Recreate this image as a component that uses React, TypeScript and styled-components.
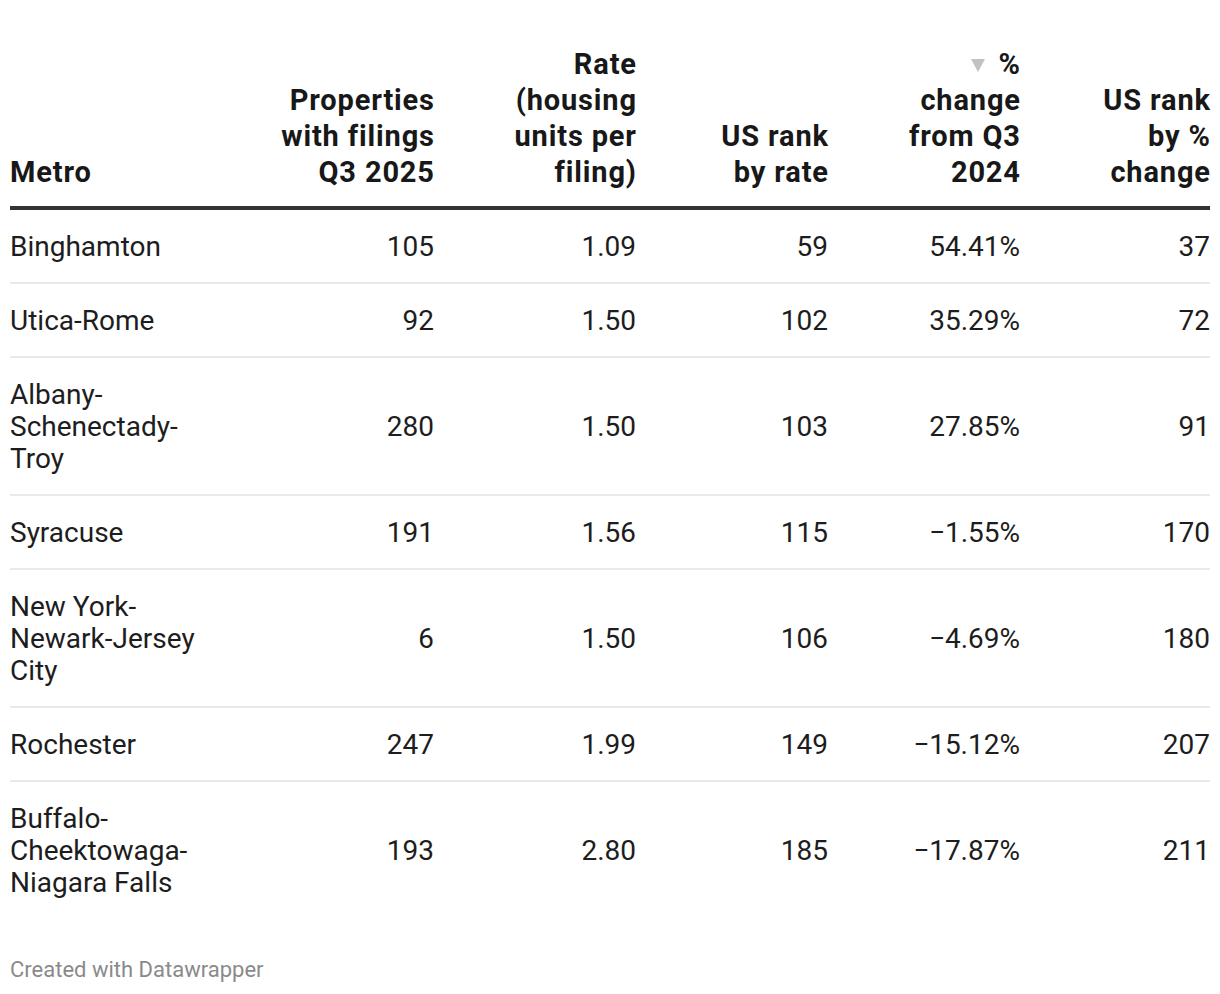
import styled, { createGlobalStyle } from "styled-components";

const GlobalStyle = createGlobalStyle`
    html, body {
        margin: 0;
        padding: 0;
        background: #ffffff;
    }
    body {
        font-family: Roboto, "Liberation Sans", sans-serif;
        color: #1d1d1d;
    }
`

const StyledChart = styled.div`
    width: 1200px;
    padding: 46px 10px 0 10px;

    table {
        width: 1200px;
        table-layout: fixed;
        border-collapse: collapse;
    }
`

const HeadCell = styled.th<{ $align?: string }>`
    font-size: 29px;
    line-height: 36px;
    font-weight: 700;
    letter-spacing: 0.85px;
    color: #181818;
    text-align: ${(p) => p.$align || "right"};
    vertical-align: bottom;
    padding: 0 0 16px 0;
    border-bottom: 4px solid #333333;

    div {
        margin-right: -0.85px;
    }
`

const Cell = styled.td<{ $align?: string }>`
    font-size: 28px;
    line-height: 32px;
    font-weight: 400;
    color: #1d1d1d;
    text-align: ${(p) => p.$align || "right"};
    vertical-align: middle;
    padding: 21px 0 19px 0;
    font-variant-numeric: tabular-nums;
`

const Row = styled.tr<{ $last?: boolean }>`
    border-bottom: ${(p) => (p.$last ? "none" : "2px solid #e9e9e9")};
`

const SortArrow = styled.svg`
    display: inline-block;
    width: 14px;
    height: 13px;
    margin-right: 14px;
    vertical-align: 2px;
`

const Footer = styled.div`
    margin-top: 40px;
    font-size: 22px;
    line-height: 24px;
    color: #8a8a8a;
`

const columns = [
    { width: 200, align: "left", lines: ["Metro"] },
    { width: 224, align: "right", lines: ["Properties", "with filings", "Q3 2025"] },
    { width: 202, align: "right", lines: ["Rate", "(housing", "units per", "filing)"] },
    { width: 192, align: "right", lines: ["US rank", "by rate"] },
    { width: 192, align: "right", lines: ["%", "change", "from Q3", "2024"], sorted: true },
    { width: 190, align: "right", lines: ["US rank", "by %", "change"] },
]

const rows = [
    ["Binghamton", "105", "1.09", "59", "54.41%", "37"],
    ["Utica-Rome", "92", "1.50", "102", "35.29%", "72"],
    ["Albany-Schenectady-Troy", "280", "1.50", "103", "27.85%", "91"],
    ["Syracuse", "191", "1.56", "115", "\u22121.55%", "170"],
    ["New York-Newark-Jersey City", "6", "1.50", "106", "\u22124.69%", "180"],
    ["Rochester", "247", "1.99", "149", "\u221215.12%", "207"],
    ["Buffalo-Cheektowaga-Niagara Falls", "193", "2.80", "185", "\u221217.87%", "211"],
]

const App = () => {
    return (
        <StyledChart>
            <GlobalStyle />
            <table>
                <colgroup>
                    {columns.map((c, i) => (
                        <col key={i} style={{ width: c.width }} />
                    ))}
                </colgroup>
                <thead>
                    <tr>
                        {columns.map((c, i) => (
                            <HeadCell key={i} $align={c.align}>
                                {c.lines.map((line, j) => (
                                    <div key={j}>
                                        {c.sorted && j === 0 && (
                                            <SortArrow viewBox="0 0 14 13">
                                                <polygon points="0,0 14,0 7,13" fill="#c2c2c2" />
                                            </SortArrow>
                                        )}
                                        {line}
                                    </div>
                                ))}
                            </HeadCell>
                        ))}
                    </tr>
                </thead>
                <tbody>
                    {rows.map((r, i) => (
                        <Row key={i} $last={i === rows.length - 1}>
                            {r.map((value, j) => (
                                <Cell key={j} $align={j === 0 ? "left" : "right"}>
                                    {value}
                                </Cell>
                            ))}
                        </Row>
                    ))}
                </tbody>
            </table>
            <Footer>Created with Datawrapper</Footer>
        </StyledChart>
    )
}

export default App;
